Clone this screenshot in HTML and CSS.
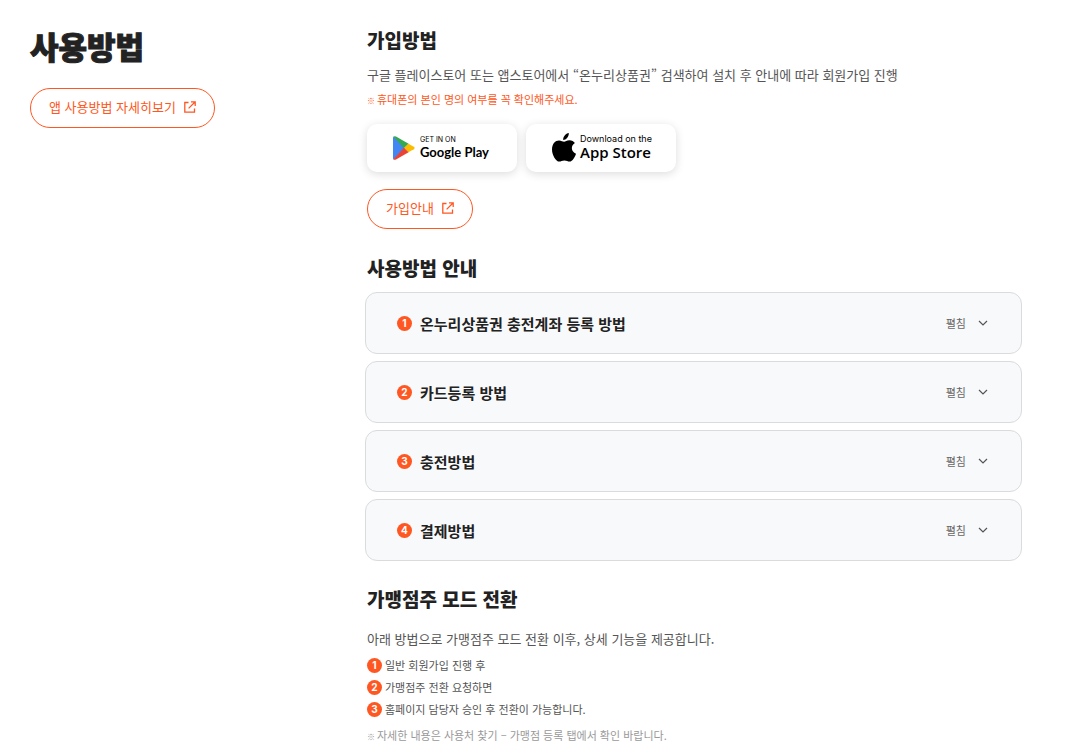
FILE: index.html
```
<!DOCTYPE html>
<html lang="ko">
<head>
    <meta charset="UTF-8">
    <meta name="viewport" content="width=device-width, initial-scale=1.0">
    <title>사용방법</title>
    <link rel="stylesheet" href="styles.css">
</head>
<body>
    <main class="guide">
        <div class="guide-side">
            <h1>사용방법</h1>
            <a class="pill" href="#">앱 사용방법 자세히보기
                <svg class="icon-link" viewBox="0 0 12 12"><path d="M4.500 1.500H.8v9.700h9.700V7.500M7 .8h4.200V5M11 1 4.600 7.400"/></svg>
            </a>
        </div>
        <div class="guide-main">
            <section class="join">
                <h2>가입방법</h2>
                <p class="desc">구글 플레이스토어 또는 앱스토어에서 “온누리상품권” 검색하여 설치 후 안내에 따라 회원가입 진행</p>
                <p class="note note-red"><span class="mark">※</span>휴대폰의 본인 명의 여부를 꼭 확인해주세요.</p>
                <div class="stores">
                    <a class="store google" href="#">
                        <svg width="22" height="24" viewBox="0 0 22 24">
                            <path fill="#4285f4" d="M.8.5 12 12 .8 23.5Q0 23 0 22V2Q0 1 .8.5z"/>
                            <path fill="#34a853" d="M.4.8Q1.400-.3 3 .5L15.600 7.800 11 12.300z"/>
                            <path fill="#fbbc04" d="M15.400 7.700 20.800 10.800Q22.600 12 20.800 13.200L15.400 16.300 11 12z"/>
                            <path fill="#ea4335" d="M.4 23.200Q1.400 24.300 3 23.500L15.600 16.200 11 11.700z"/>
                        </svg>
                        <span class="store-text"><small>GET IN ON</small><b>Google Play</b></span>
                    </a>
                    <a class="store apple" href="#">
                        <svg width="24" height="30" viewBox="0 0 24 30">
                            <path d="M16.800 0c.3 3.600-2.700 7-5.600 7C10.800 3.700 13.800.5 16.800 0z"/>
                            <path d="M12 8.700c1.300 0 2.900-1.500 5.500-1.500 2.300 0 4.300 1.200 5.400 2.800-4.500 2.800-3.800 8.800 1.100 10.700-.9 2.800-3.400 7.900-6.400 7.900-2 0-2.800-1.200-5.200-1.200s-3.400 1.200-5.100 1.200C3.900 28.600 0 22 0 16.400 0 10.600 3.400 7.400 7 7.400c2.200 0 3.900 1.300 5 1.300z"/>
                        </svg>
                        <span class="store-text"><small>Download on the</small><b>App Store</b></span>
                    </a>
                </div>
                <a class="pill" href="#">가입안내
                    <svg class="icon-link" viewBox="0 0 12 12"><path d="M4.500 1.500H.8v9.700h9.700V7.500M7 .8h4.200V5M11 1 4.600 7.400"/></svg>
                </a>
            </section>

            <section class="howto">
                <h2>사용방법 안내</h2>
                <div class="accordion">
                    <button type="button" class="item" aria-expanded="false">
                        <span class="num">1</span><span class="item-title">온누리상품권 충전계좌 등록 방법</span>
                        <span class="toggle">펼침</span><svg class="icon-down" viewBox="0 0 10 6"><path d="m1 1 4 4 4-4"/></svg>
                    </button>
                    <button type="button" class="item" aria-expanded="false">
                        <span class="num">2</span><span class="item-title">카드등록 방법</span>
                        <span class="toggle">펼침</span><svg class="icon-down" viewBox="0 0 10 6"><path d="m1 1 4 4 4-4"/></svg>
                    </button>
                    <button type="button" class="item" aria-expanded="false">
                        <span class="num">3</span><span class="item-title">충전방법</span>
                        <span class="toggle">펼침</span><svg class="icon-down" viewBox="0 0 10 6"><path d="m1 1 4 4 4-4"/></svg>
                    </button>
                    <button type="button" class="item" aria-expanded="false">
                        <span class="num">4</span><span class="item-title">결제방법</span>
                        <span class="toggle">펼침</span><svg class="icon-down" viewBox="0 0 10 6"><path d="m1 1 4 4 4-4"/></svg>
                    </button>
                </div>
            </section>

            <section class="owner">
                <h2>가맹점주 모드 전환</h2>
                <p class="desc">아래 방법으로 가맹점주 모드 전환 이후, 상세 기능을 제공합니다.</p>
                <ol class="steps">
                    <li><span class="num">1</span>일반 회원가입 진행 후</li>
                    <li><span class="num">2</span>가맹점주 전환 요청하면</li>
                    <li><span class="num">3</span>홈페이지 담당자 승인 후 전환이 가능합니다.</li>
                </ol>
                <p class="note"><span class="mark">※</span>자세한 내용은 사용처 찾기 – 가맹점 등록 탭에서 확인 바랍니다.</p>
            </section>
        </div>
    </main>
</body>
</html>
```
FILE: styles.css
```
* {
    box-sizing: border-box;
}
body {
    margin: 0;
    background: #fff;
    color: #222;
    font-family: "Noto Sans CJK KR", sans-serif;
    font-size: 13px;
}
h1, h2, p, ol {
    margin: 0;
    padding: 0;
}
a {
    color: inherit;
    text-decoration: none;
}
.guide {
    display: grid;
    grid-template-columns: 337px 1fr;
    padding: 26px 50px 0 30px;
}
h1, h2 {
    font-weight: 900;
}
h1 {
    font-size: 31px;
    line-height: 40px;
    margin-bottom: 22px;
    -webkit-text-stroke: 1px #222;
}
h2 {
    font-size: 19px;
    line-height: 28px;
}
.pill {
    display: inline-flex;
    align-items: center;
    gap: 8px;
    height: 40px;
    padding: 0 18px 2px;
    border: 1px solid #ff5722;
    border-radius: 20px;
    color: #ff5722;
    line-height: 20px;
}
.icon-link {
    width: 12px;
    height: 12px;
    fill: none;
    stroke: #ff5722;
    stroke-width: 1.3;
}
.desc {
    color: #555;
    line-height: 20px;
}
.note {
    color: #999;
    font-size: 11px;
    line-height: 18px;
}
.note-red {
    color: #ff5722;
}
.mark {
    display: inline-block;
    width: 10px;
    font-size: 8px;
    font-weight: 700;
}

/* join */
.join .desc {
    margin: 11px 0 5px;
}
.stores {
    display: flex;
    gap: 9px;
    margin: 14px 0 17px;
}
.store {
    display: flex;
    align-items: center;
    width: 150px;
    height: 48px;
    padding-left: 26px;
    border-radius: 10px;
    box-shadow: 0 2px 10px rgba(0, 0, 0, 0.14);
    color: #000;
    white-space: nowrap;
}
.store-text {
    display: flex;
    flex-direction: column;
    padding-bottom: 2px;
}
.store small {
    font: 8px/10px Inter, sans-serif;
}
.google {
    gap: 5px;
}
.google small {
    font-size: 7px;
}
.google b {
    font: 700 13px/15px Lato, sans-serif;
}
.apple {
    gap: 4px;
}
.apple small {
    font-size: 9px;
}
.apple b {
    font: 600 15px/16px "Open Sans", sans-serif;
}

/* accordion */
.howto {
    margin-top: 25px;
}
.accordion {
    display: flex;
    flex-direction: column;
    gap: 7px;
    margin: 10px 0 0 -2px;
}
.item {
    display: flex;
    align-items: center;
    height: 62px;
    padding: 0 33px 0 31px;
    border: 1px solid #d9dbdd;
    border-radius: 12px;
    background: #f8f9fb;
    color: #222;
    font-family: inherit;
    text-align: left;
    cursor: pointer;
}
.num {
    flex: none;
    width: 15px;
    height: 15px;
    border-radius: 50%;
    background: #ff5722;
    color: #fff;
    font: 700 10px/15px Inter, sans-serif;
    text-align: center;
}
.item-title {
    flex: 1;
    margin-left: 8px;
    font-size: 15px;
    font-weight: 700;
}
.toggle {
    color: #666;
    font-size: 11px;
}
.icon-down {
    width: 10px;
    height: 6px;
    margin-left: 12px;
    fill: none;
    stroke: #555;
    stroke-width: 1.2;
}

/* store owner mode */
.owner {
    margin-top: 24px;
}
.owner .desc {
    margin: 16px 0 5px;
}
.steps {
    list-style: none;
    color: #555;
    font-size: 11px;
    margin-bottom: 6px;
}
.steps li {
    display: flex;
    align-items: center;
    gap: 3px;
    height: 22px;
}
```
